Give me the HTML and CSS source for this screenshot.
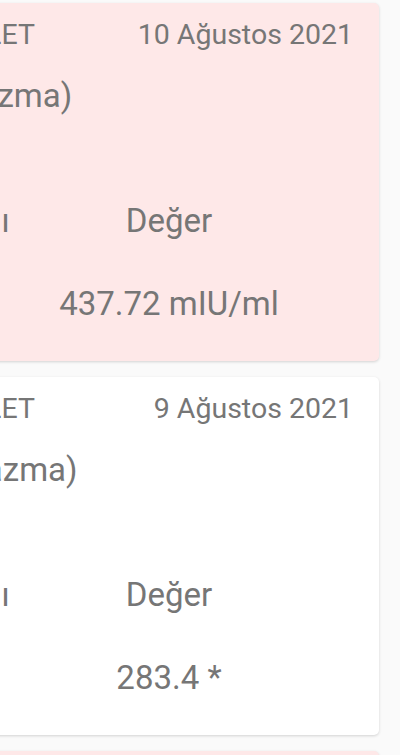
FILE: index.html
```html
<!DOCTYPE html>
<html lang="tr">
<head>
    <meta charset="UTF-8">
    <title>Tahlillerim</title>
    <link rel="stylesheet" href="styles.css">
</head>
<body>
    <div class="list">
        <div class="card card-alert">
            <div class="card-head">
                <span class="place">İLÇE DEVLET</span>
                <span class="date">10 Ağustos 2021</span>
            </div>
            <div class="card-title">hCG (Plazma)</div>
            <div class="result">
                <span class="cell">Tetkik adı</span>
                <span class="cell value">Değer</span>
                <span class="cell">hCG</span>
                <span class="cell value">437.72 mIU/ml</span>
            </div>
        </div>
        <div class="card">
            <div class="card-head">
                <span class="place">İLÇE DEVLET</span>
                <span class="date">9 Ağustos 2021</span>
            </div>
            <div class="card-title">HCG (Plazma)</div>
            <div class="result">
                <span class="cell">Tetkik adı</span>
                <span class="cell value">Değer</span>
                <span class="cell">HCG</span>
                <span class="cell value">283.4 *</span>
            </div>
        </div>
        <div class="card card-alert">
            <div class="card-head">
                <span class="place">İLÇE DEVLET</span>
                <span class="date">5 Ağustos 2021</span>
            </div>
            <div class="card-title">hCG (Plazma)</div>
        </div>
    </div>
</body>
</html>
```

FILE: styles.css
```css
body{
    margin: 0;
    background: #fafafa;
    font-family: Roboto, "Noto Sans", sans-serif;
    color: #767676;
    overflow: hidden;
}
.list{
    width: 538px;
    margin-left: -159px;
    padding-top: 3px;
    display: flex;
    flex-direction: column;
    gap: 16px;
}
.card{
    background: #fff;
    border-radius: 5px;
    box-shadow: 0 1px 3px rgba(0,0,0,0.16);
    padding: 12px 26px 35px 28px;
}
.card-alert{
    background: #fee8e8;
}
.card-head{
    display: flex;
    justify-content: space-between;
    font-size: 28.5px;
    line-height: 40px;
}
.card-title{
    margin-top: 19px;
    font-size: 33px;
    line-height: 44px;
}
.result{
    margin-top: 81px;
    display: grid;
    grid-template-columns: 150px 300px;
    row-gap: 39px;
    font-size: 33px;
    line-height: 44px;
}
.cell{
    white-space: nowrap;
}
.value{
    text-align: center;
}
```
